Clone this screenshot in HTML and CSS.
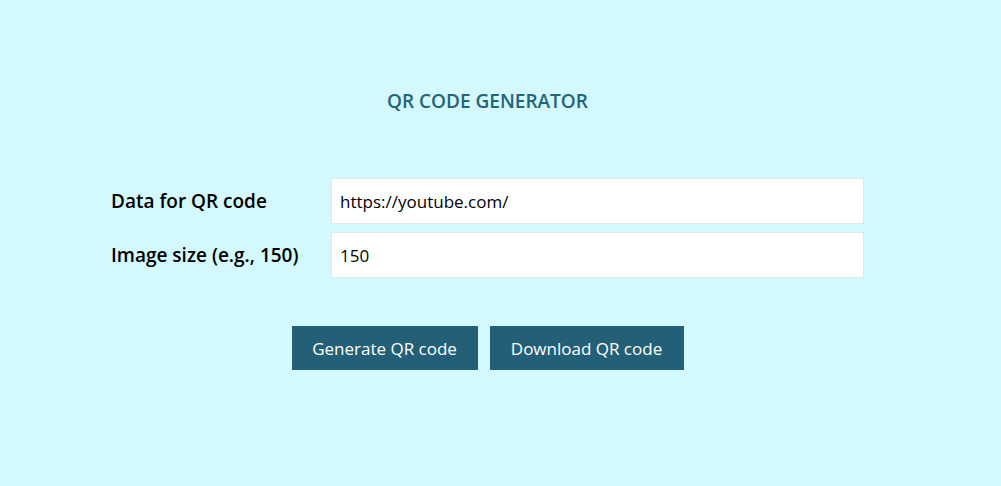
FILE: index.html
```html
<!DOCTYPE html>
<html>
<head>
<meta charset="utf-8">
<link rel="stylesheet" href="styles.css">
</head>
<body>
<div class="wrap">
  <h1 class="title">QR CODE GENERATOR</h1>
  <div class="form">
    <div class="row">
      <label class="label">Data for QR code</label>
      <div class="input">https://youtube.com/</div>
    </div>
    <div class="row">
      <label class="label">Image size (e.g., 150)</label>
      <div class="input">150</div>
    </div>
  </div>
  <div class="actions">
    <button class="btn btn-gen">Generate QR code</button>
    <button class="btn btn-dl">Download QR code</button>
  </div>
</div>
</body>
</html>
```

FILE: styles.css
```css
html, body {
  margin: 0;
  padding: 0;
  background: #d3f8fd;
  height: 100%;
}
body {
  font-family: "Open Sans", "Noto Sans", sans-serif;
  color: #000;
}
.wrap {
  width: 753px;
  margin-left: 111px;
  padding-top: 88px;
}
.title {
  margin: 0;
  text-align: center;
  font-size: 19px;
  line-height: 26px;
  font-weight: 600;
  color: #236478;
  letter-spacing: 0;
}
.form {
  margin-top: 64px;
  display: flex;
  flex-direction: column;
  gap: 8px;
}
.row {
  display: flex;
  align-items: center;
}
.label {
  width: 220px;
  flex: none;
  font-size: 19px;
  font-weight: 600;
  letter-spacing: 0;
}
.input {
  flex: 1;
  height: 44px;
  box-sizing: content-box;
  border: 1px solid #e2e6e8;
  background: #fff;
  display: flex;
  align-items: center;
  padding-left: 8px;
  font-size: 17px;
  letter-spacing: 0;
}
.actions {
  margin-top: 48px;
  display: flex;
  justify-content: center;
  gap: 12px;
}
.btn {
  border: none;
  background: #235f76;
  color: #fff;
  height: 44px;
  font-family: "Open Sans", "Noto Sans", sans-serif;
  font-size: 17px;
  letter-spacing: 0;
  padding: 0;
}
.btn-gen { width: 186px; }
.btn-dl { width: 194px; }
```
